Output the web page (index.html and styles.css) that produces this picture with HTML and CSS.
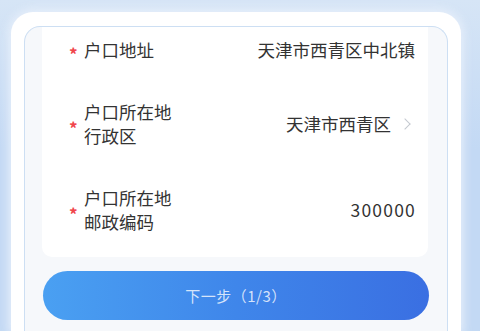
FILE: index.html
```html
<!DOCTYPE html>
<html lang="zh-CN">
<head>
    <meta charset="UTF-8">
    <meta name="viewport" content="width=device-width, initial-scale=1.0">
    <title>户口信息</title>
    <link rel="stylesheet" href="styles.css">
</head>
<body>
    <div class="page">
        <div class="sheet">
            <div class="panel">
                <div class="form">
                    <div class="form-row">
                        <div class="label"><span class="star">*</span><span class="label-text">户口地址</span></div>
                        <div class="value">天津市西青区中北镇</div>
                    </div>
                    <div class="form-row">
                        <div class="label"><span class="star">*</span><span class="label-text">户口所在地<br>行政区</span></div>
                        <div class="value">天津市西青区<span class="arrow"></span></div>
                    </div>
                    <div class="form-row">
                        <div class="label"><span class="star">*</span><span class="label-text">户口所在地<br>邮政编码</span></div>
                        <div class="value value-num">300000</div>
                    </div>
                </div>
                <button class="next-btn">下一步（1/3）</button>
            </div>
        </div>
    </div>
</body>
</html>
```

FILE: styles.css
```css
html, body {
    margin: 0;
    padding: 0;
    height: 100%;
}
body {
    font-family: "Noto Sans CJK SC", "Noto Sans", sans-serif;
    color: #333;
    background: linear-gradient(180deg, #d6e5f6 0%, #c3d9f4 45%, #c3d9f4 100%);
    overflow: hidden;
}
.page {
    height: 100%;
    box-sizing: border-box;
    padding: 12px 19px 0 11px;
}
/* White outer sheet */
.sheet {
    height: 100%;
    box-sizing: border-box;
    background-color: #fff;
    border-radius: 22px 22px 0 0;
    padding: 14px 13px 0;
    box-shadow: 0 0 10px 3px rgba(232, 240, 251, 0.9);
}
/* Inner bordered panel */
.panel {
    height: 100%;
    box-sizing: border-box;
    background-color: #f6f8fb;
    border: 1px solid #cddff3;
    border-bottom: none;
    border-radius: 16px 16px 0 0;
    padding: 0 19px 0 17px;
    overflow: hidden;
}
/* Form card */
.form {
    background-color: #fff;
    border-radius: 0 0 10px 10px;
    margin-top: -8px;
    padding: 0 13px 4px 27px;
}
.form-row {
    display: flex;
    justify-content: space-between;
    align-items: center;
    padding: 19px 0;
}
.label {
    display: flex;
    align-items: center;
}
.star {
    color: #f0454b;
    font-size: 17px;
    font-weight: bold;
    width: 15px;
    line-height: 1;
    margin-top: 7px;
}
.label-text {
    font-size: 17.5px;
    line-height: 24px;
}
.value {
    font-size: 17.5px;
    line-height: 24px;
    display: flex;
    align-items: center;
}
.value-num {
    letter-spacing: 1.2px;
    margin-right: -1px;
}
.arrow {
    width: 7px;
    height: 7px;
    border-top: 1.5px solid #c4c8cf;
    border-right: 1.5px solid #c4c8cf;
    transform: rotate(45deg);
    margin-left: 10px;
    margin-right: 6px;
}
/* Next button */
.next-btn {
    display: block;
    width: 100%;
    height: 49px;
    margin: 14px 0 0 1px;
    border: none;
    border-radius: 25px;
    background: linear-gradient(90deg, #4aa0f2 0%, #3f86ea 50%, #3a6fe2 100%);
    color: rgba(255, 255, 255, 0.78);
    font-family: inherit;
    font-size: 15px;
    letter-spacing: 0.5px;
}
```
